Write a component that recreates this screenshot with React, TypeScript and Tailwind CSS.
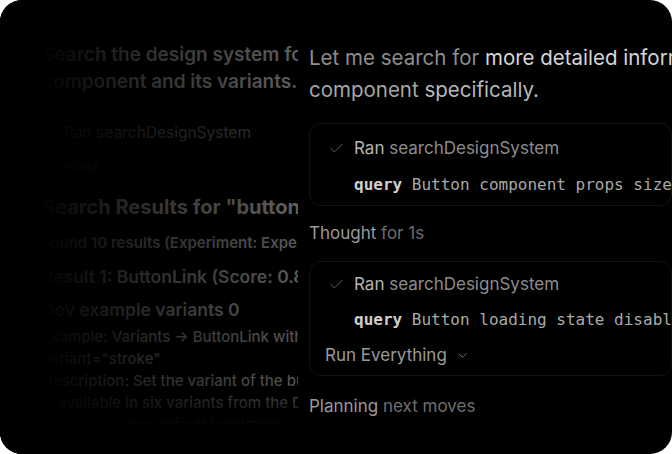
import { Check, ChevronDown } from 'lucide-react';

const sans = { fontFamily: 'Inter, "Noto Sans", sans-serif' };
const mono = { fontFamily: '"DejaVu Sans Mono", "Liberation Mono", monospace' };

function ToolCard({ query, extra }: { query: string; extra?: boolean }) {
  return (
    <div
      className={`rounded-[12px] border border-[#131313] px-[15px] ${
        extra ? 'pt-[10px] pb-2' : 'pt-3 pb-2'
      }`}
    >
      <div className="flex items-center gap-[9px] pl-[3px] h-6 text-[17px] leading-6">
        <Check className="w-[17px] h-[17px] text-[#5c5c5c]" strokeWidth={1.4} />
        <span>
          <span className="text-[#b4b4b4]">Ran</span>{' '}
          <span className="text-[#8c8c8c]">searchDesignSystem</span>
        </span>
      </div>
      <div className={`${extra ? 'mt-3' : 'mt-[13px]'} pl-[29px] h-6 leading-6 text-[16px]`} style={mono}>
        <span className="font-bold text-[#cfcfcf]">query</span>{' '}
        <span className="text-[#a9a9a9]">{query}</span>
      </div>
      {extra && (
        <div className="mt-[11px] flex items-center gap-2 h-6 leading-6 text-[17px] text-[#9a9a9a]">
          Run Everything
          <ChevronDown className="w-[15px] h-[15px] text-[#7a7a7a]" strokeWidth={1.5} />
        </div>
      )}
    </div>
  );
}

export default function App() {
  return (
    <div className="w-[672px] h-[454px] bg-white">
      <div
        className="w-full h-full rounded-[22px] bg-black overflow-hidden flex whitespace-nowrap"
        style={sans}
      >
        {/* previous message, dimmed */}
        <div className="relative w-[298px] shrink-0 overflow-hidden pl-[42px] pt-[41px]">
          <p className="text-[19px] leading-[27px] font-semibold text-[#5e5e5e]">
            Search the design system for Button
            <br />
            component and its variants.
          </p>
          <div className="mt-[27px] flex items-center gap-[7px] text-[15.5px] leading-[22px] text-[#363636]">
            <Check className="w-[15px] h-[15px]" strokeWidth={1.4} />
            <span>Ran searchDesignSystem</span>
          </div>
          <div className="mt-4 text-[10px] leading-[14px] tracking-[0.06em] text-[#2a2a2a]">
            RESPONSE
          </div>
          <h2 className="mt-5 text-[20px] leading-[26px] font-bold text-[#606060]">
            Search Results for "button component"
          </h2>
          <p className="mt-[13px] text-[15px] leading-5 font-semibold text-[#575757]">
            Found 10 results (Experiment: Expert mode)
          </p>
          <p className="mt-[13px] text-[17.5px] leading-[22px] font-semibold text-[#5a5a5a]">
            Result 1: ButtonLink (Score: 0.82)
          </p>
          <p className="mt-[11px] text-[17.5px] leading-[22px] font-semibold text-[#5a5a5a]">
            Dev example variants 0
          </p>
          <div className="mt-[5px] text-[15px] leading-[22px] font-medium text-[#545454]">
            <p>Example: Variants → ButtonLink with</p>
            <p>variant="stroke"</p>
            <p>Description: Set the variant of the button.</p>
            <p>is available in six variants from the Design</p>
            <p>system and the default is primary.</p>
          </div>
          <div className="absolute inset-0 bg-linear-to-r from-black from-[13%] via-black/45 via-[55%] to-transparent to-[100%]" />
          <div className="absolute inset-0 bg-linear-to-b from-transparent from-[85%] to-black to-[94%]" />
        </div>

        {/* current message */}
        <div className="flex-1 overflow-hidden pl-[11px] pt-[42px]">
          <p className="text-[20.5px] leading-8">
            <span className="text-[#8e8e8e]">Let me search for </span>
            <span className="text-[#d6d6d6]">more detailed information about the Button</span>
            <br />
            <span className="text-[#a6a6a6]">component </span>
            <span className="text-[#b8b8b8]">specifically.</span>
          </p>
          <div className="mt-[17px]">
            <ToolCard query="Button component props size variants" />
          </div>
          <div className="mt-[15px] h-6 leading-6 text-[17px]">
            <span className="text-[#9a9a9a]">Thought</span>{' '}
            <span className="text-[#6e6e6e]">for 1s</span>
          </div>
          <div className="mt-4">
            <ToolCard query="Button loading state disabled" extra />
          </div>
          <div className="mt-[18px] h-6 leading-6 text-[17px]">
            <span className="text-[#9a9a9a]">Planning</span>{' '}
            <span className="text-[#6e6e6e]">next moves</span>
          </div>
        </div>
      </div>
    </div>
  );
}
